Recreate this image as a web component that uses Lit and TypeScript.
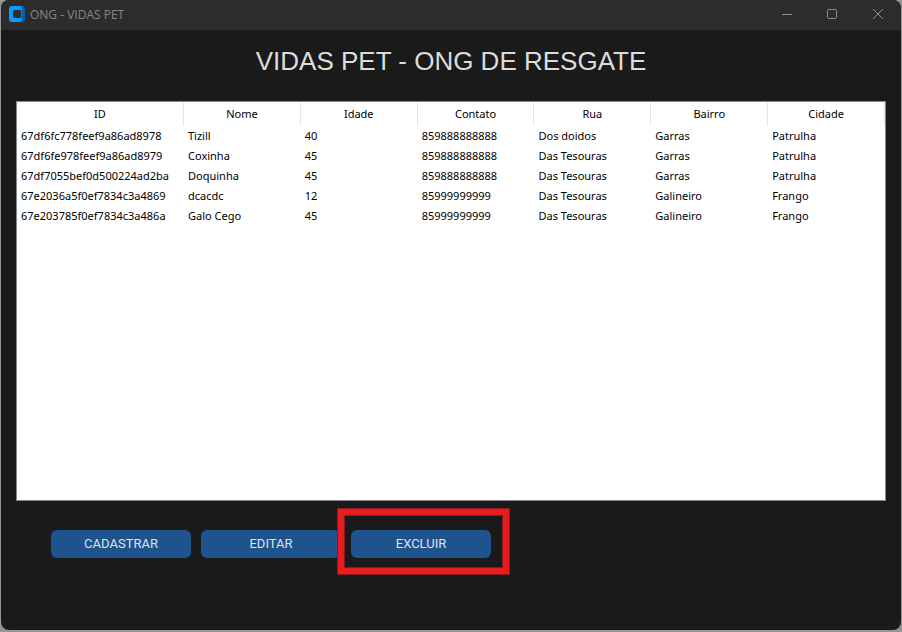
import { LitElement, html, css } from "lit";
import { customElement, property } from "lit/decorators.js";

interface Pet {
  id: string;
  nome: string;
  idade: string;
  contato: string;
  rua: string;
  bairro: string;
  cidade: string;
}

const COLUMNS: { key: keyof Pet; label: string }[] = [
  { key: "id", label: "ID" },
  { key: "nome", label: "Nome" },
  { key: "idade", label: "Idade" },
  { key: "contato", label: "Contato" },
  { key: "rua", label: "Rua" },
  { key: "bairro", label: "Bairro" },
  { key: "cidade", label: "Cidade" },
];

const PETS: Pet[] = [
  { id: "67df6fc778feef9a86ad8978", nome: "Tizill", idade: "40", contato: "859888888888", rua: "Dos doidos", bairro: "Garras", cidade: "Patrulha" },
  { id: "67df6fe978feef9a86ad8979", nome: "Coxinha", idade: "45", contato: "859888888888", rua: "Das Tesouras", bairro: "Garras", cidade: "Patrulha" },
  { id: "67df7055bef0d500224ad2ba", nome: "Doquinha", idade: "45", contato: "859888888888", rua: "Das Tesouras", bairro: "Garras", cidade: "Patrulha" },
  { id: "67e2036a5f0ef7834c3a4869", nome: "dcacdc", idade: "12", contato: "85999999999", rua: "Das Tesouras", bairro: "Galineiro", cidade: "Frango" },
  { id: "67e203785f0ef7834c3a486a", nome: "Galo Cego", idade: "45", contato: "85999999999", rua: "Das Tesouras", bairro: "Galineiro", cidade: "Frango" },
];

@customElement("title-bar")
export class TitleBar extends LitElement {
  @property() caption = "";

  static styles = css`
    :host {
      display: flex;
      align-items: flex-start;
      height: 30px;
      padding-left: 8px;
      background: #2c2c2c;
      color: #878787;
      font: 12px/30px "Open Sans", "Noto Sans", sans-serif;
    }
    .logo {
      width: 16px;
      height: 28px;
      margin-right: 5px;
    }
    .caption {
      flex: 1;
    }
    .control {
      display: flex;
      align-items: center;
      justify-content: center;
      width: 46px;
      height: 28px;
      padding: 0;
      border: 0;
      background: none;
      color: #8c8c8c;
    }
    .glyph {
      width: 12px;
      height: 12px;
      fill: none;
      stroke: currentColor;
    }
  `;

  render() {
    return html`
      <svg class="logo" viewBox="0 0 16 16" aria-hidden="true">
        <path d="M11 0h2a3 3 0 0 1 3 3v10a3 3 0 0 1-3 3h-2z" fill="#0560b0" />
        <path d="M3 0h8.500a1 1 0 0 1 1 1v14a1 1 0 0 1-1 1H3a3 3 0 0 1-3-3V3a3 3 0 0 1 3-3z" fill="#0a9bff" />
        <rect x="4" y="4" width="8" height="8" rx="1.500" fill="#2c2c2c" />
      </svg>
      <span class="caption">${this.caption}</span>
      <button class="control" aria-label="Minimizar">
        <svg class="glyph" viewBox="0 0 12 12"><path d="M2 6.500h10" /></svg>
      </button>
      <button class="control" aria-label="Maximizar">
        <svg class="glyph" viewBox="0 0 12 12"><rect x="1.500" y="1.500" width="9" height="9" rx="1" /></svg>
      </button>
      <button class="control" aria-label="Fechar">
        <svg class="glyph" viewBox="0 0 12 12"><path d="M1 1l10 10M11 1L1 11" /></svg>
      </button>
    `;
  }
}

@customElement("pet-table")
export class PetTable extends LitElement {
  @property({ attribute: false }) pets: Pet[] = [];

  static styles = css`
    :host {
      display: block;
      box-sizing: border-box;
      border: 1px solid #828790;
      background: #fff;
      color: #000;
      font: 11px/20px "Noto Sans", "Open Sans", sans-serif;
    }
    .grid {
      width: 100%;
      table-layout: fixed;
      border-collapse: separate;
      border-spacing: 0;
    }
    .head {
      box-sizing: border-box;
      height: 24px;
      padding: 0;
      border-right: 1px solid #e5e5e5;
      font-weight: 400;
      text-align: center;
    }
    .head-id {
      width: 167px;
    }
    .cell {
      height: 20px;
      padding: 0 4px;
      white-space: nowrap;
    }
  `;

  render() {
    return html`
      <table class="grid">
        <thead>
          <tr>
            ${COLUMNS.map((c) => html`<th scope="col" class="head head-${c.key}">${c.label}</th>`)}
          </tr>
        </thead>
        <tbody>
          ${this.pets.map((p) => html`<tr>${COLUMNS.map((c) => html`<td class="cell">${p[c.key]}</td>`)}</tr>`)}
        </tbody>
      </table>
    `;
  }
}

@customElement("app-root")
export class AppRoot extends LitElement {
  static styles = css`
    :host {
      display: flex;
      box-sizing: border-box;
      min-height: 100vh;
      padding: 0 1px 2px;
      background: #959595;
    }
    .window {
      flex: 1;
      display: flex;
      flex-direction: column;
      min-width: 0;
      overflow: hidden;
      border-radius: 8px;
      background: #1a1a1a;
    }
    .title {
      margin: 16px 0 24px;
      color: #dcdcdc;
      font: 400 26px/31px "Liberation Sans", Arial, sans-serif;
      text-align: center;
    }
    .table {
      flex: 1;
      margin: 0 15px;
    }
    .actions {
      display: flex;
      gap: 10px;
      padding: 29px 50px 72px;
    }
    .action {
      width: 140px;
      height: 28px;
      padding: 0;
      border: 0;
      border-radius: 6px;
      background: #1f538d;
      color: #dce4ee;
      font: 13px/16px Roboto, sans-serif;
    }
    .marked {
      position: relative;
      display: flex;
    }
    .marked::after {
      content: "";
      position: absolute;
      inset: -21px -18px -16px -13px;
      box-sizing: border-box;
      border: 6px solid #e81c1c;
      box-shadow: 0 0 0 1px #851b1b, inset 0 0 0 1px #851b1b;
      pointer-events: none;
    }
  `;

  render() {
    return html`
      <main class="window">
        <title-bar caption="ONG - VIDAS PET"></title-bar>
        <h1 class="title">VIDAS PET - ONG DE RESGATE</h1>
        <pet-table class="table" .pets=${PETS}></pet-table>
        <div class="actions">
          <button class="action">CADASTRAR</button>
          <button class="action">EDITAR</button>
          <div class="marked"><button class="action">EXCLUIR</button></div>
        </div>
      </main>
    `;
  }
}
